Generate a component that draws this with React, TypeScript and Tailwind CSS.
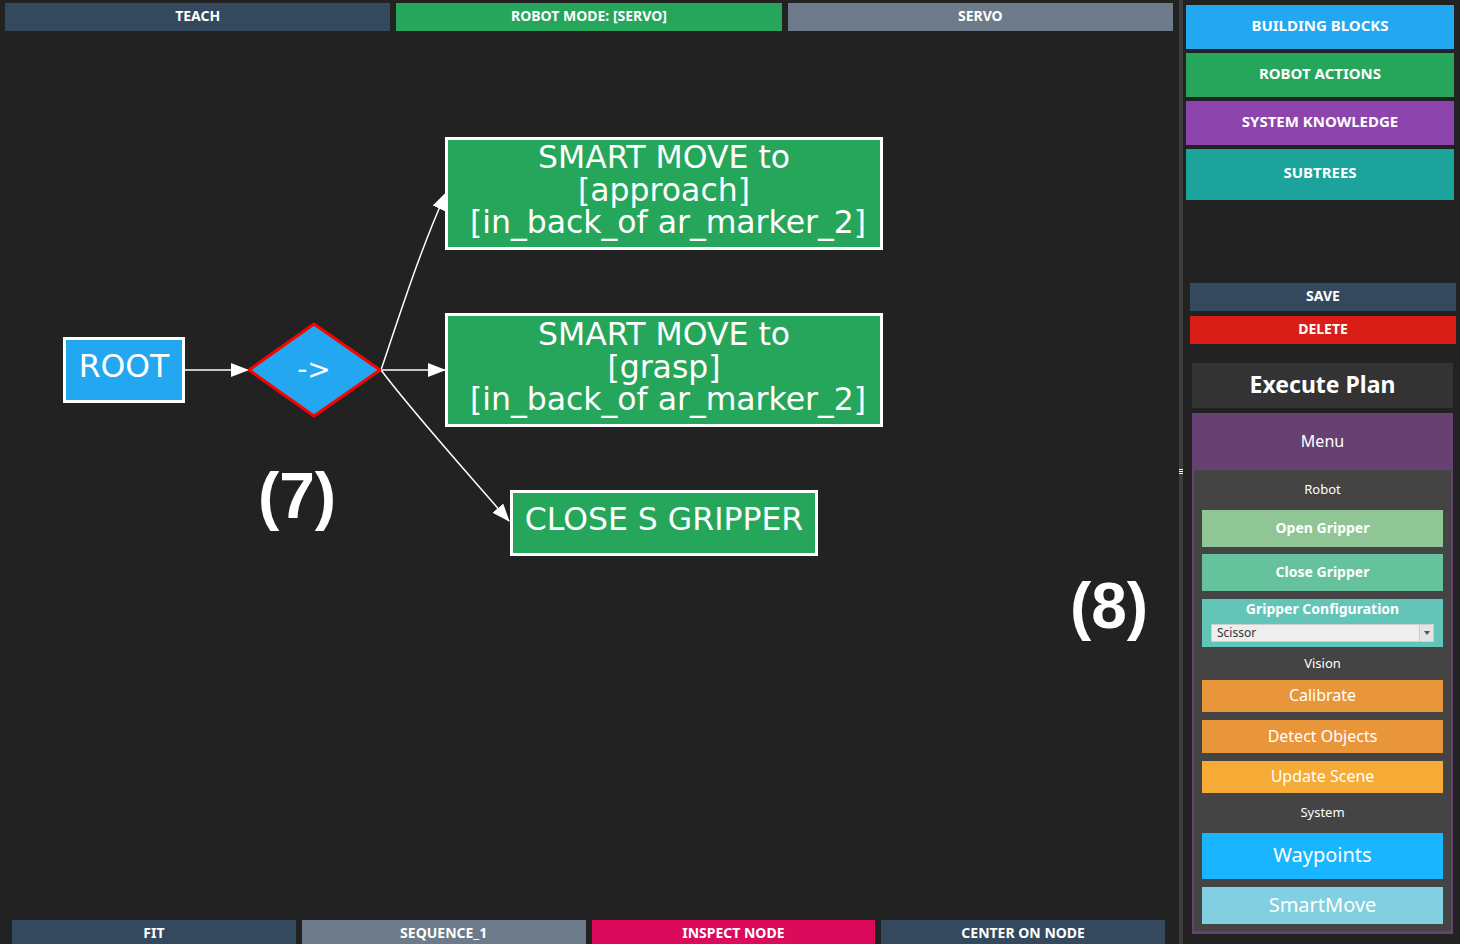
import React from "react";

const topTabs = [
  { label: "TEACH", cls: "bg-[#34495e]" },
  { label: "ROBOT MODE: [SERVO]", cls: "bg-[#26a65b]" },
  { label: "SERVO", cls: "bg-[#6c7a89]" },
];

const bottomTabs = [
  { label: "FIT", cls: "bg-[#34495e]" },
  { label: "SEQUENCE_1", cls: "bg-[#6c7a89]" },
  { label: "INSPECT NODE", cls: "bg-[#db0a5b]" },
  { label: "CENTER ON NODE", cls: "bg-[#34495e]" },
];

const paletteTabs = [
  { label: "BUILDING BLOCKS", cls: "bg-[#22a7f0] h-[44px]" },
  { label: "ROBOT ACTIONS", cls: "bg-[#26a65b] h-[44px]" },
  { label: "SYSTEM KNOWLEDGE", cls: "bg-[#8e44ad] h-[44px]" },
  { label: "SUBTREES", cls: "bg-[#1ba39c] h-[51px]" },
];

const graphFont = "'DejaVu Sans', sans-serif";

function Graph() {
  return (
    <svg className="absolute inset-0" width="1179" height="889" viewBox="0 0 1179 889">
      <defs>
        <marker id="arr" markerWidth="18" markerHeight="14" refX="17" refY="7" orient="auto" markerUnits="userSpaceOnUse">
          <path d="M0,0 L18,7 L0,14 Z" fill="#fff" />
        </marker>
      </defs>
      <g transform="translate(0,-31)">
        {/* edges */}
        <line x1="185" y1="370" x2="248" y2="370" stroke="#fff" strokeWidth="1.5" markerEnd="url(#arr)" />
        <path d="M381,370 C398,320 420,250 446,193" stroke="#fff" strokeWidth="1.5" fill="none" markerEnd="url(#arr)" />
        <line x1="381" y1="370" x2="445" y2="370" stroke="#fff" strokeWidth="1.5" markerEnd="url(#arr)" />
        <path d="M381,370 C415,415 465,470 509,521" stroke="#fff" strokeWidth="1.5" fill="none" markerEnd="url(#arr)" />

        {/* root */}
        <rect x="64.5" y="338.5" width="119" height="63" fill="#22a7f0" stroke="#fff" strokeWidth="3" />
        <text x="124" y="377" fill="#fff" fontSize="31.5" textAnchor="middle" fontFamily={graphFont}>ROOT</text>

        {/* sequence */}
        <polygon points="249,370 314,324 380,370 314,416" fill="#22a7f0" stroke="#ff0000" strokeWidth="3" strokeLinejoin="round" />
        <text x="314" y="379" fill="#fff" fontSize="28" textAnchor="middle" fontFamily={graphFont}>-&gt;</text>

        {/* smart move approach */}
        <rect x="446.5" y="138.5" width="435" height="110" fill="#26a65b" stroke="#fff" strokeWidth="3" />
        <text fill="#fff" fontSize="31.5" textAnchor="middle" fontFamily={graphFont}>
          <tspan x="664" y="168">SMART MOVE to</tspan>
          <tspan x="664" y="201">[approach]</tspan>
          <tspan x="668" y="233">[in_back_of ar_marker_2]</tspan>
        </text>

        {/* smart move grasp */}
        <rect x="446.5" y="314.5" width="435" height="111" fill="#26a65b" stroke="#fff" strokeWidth="3" />
        <text fill="#fff" fontSize="31.5" textAnchor="middle" fontFamily={graphFont}>
          <tspan x="664" y="345">SMART MOVE to</tspan>
          <tspan x="664" y="378">[grasp]</tspan>
          <tspan x="668" y="410">[in_back_of ar_marker_2]</tspan>
        </text>

        {/* close gripper */}
        <rect x="511.5" y="491.5" width="305" height="63" fill="#26a65b" stroke="#fff" strokeWidth="3" />
        <text x="664" y="530" fill="#fff" fontSize="31.5" textAnchor="middle" fontFamily={graphFont}>CLOSE S GRIPPER</text>

        {/* annotations */}
        <text x="297" y="518" fill="#fff" fontSize="64" fontWeight="bold" textAnchor="middle" fontFamily="'Liberation Sans', sans-serif">(7)</text>
        <text x="1109" y="628" fill="#fff" fontSize="64" fontWeight="bold" textAnchor="middle" fontFamily="'Liberation Sans', sans-serif">(8)</text>
      </g>
    </svg>
  );
}

function MenuButton({ label, cls }: { label: string; cls: string }) {
  return (
    <div className={`flex items-center justify-center pb-[2px] text-white ${cls}`}>{label}</div>
  );
}

export default function App() {
  return (
    <div className="flex h-[944px] w-[1460px] overflow-hidden bg-[#222222] font-['Noto_Sans',sans-serif] text-white">
      {/* Left: editor */}
      <div className="flex w-[1179px] flex-col">
        <div className="flex gap-[6px] pl-[5px] pr-[6px] pt-[3px]">
          {topTabs.map(t => (
            <div key={t.label} className={`flex h-[28px] flex-1 items-center justify-center pb-[3px] text-[14px] font-bold ${t.cls}`}>
              {t.label}
            </div>
          ))}
        </div>

        <div className="relative flex-1">
          <Graph />
        </div>

        <div className="flex h-[24px] gap-[6px] pl-[12px] pr-[14px]">
          {bottomTabs.map(t => (
            <div key={t.label} className={`flex h-[28px] flex-1 items-start justify-center pt-[2px] text-[14px] font-bold ${t.cls}`}>
              {t.label}
            </div>
          ))}
        </div>
      </div>

      {/* Splitter */}
      <div className="relative w-[4px] bg-[#3c3c3c]">
        <div className="absolute left-[0px] top-[469px] flex w-[4px] flex-col gap-[1px]">
          <div className="h-[1px] bg-white" />
          <div className="h-[1px] bg-white" />
          <div className="h-[1px] bg-white" />
        </div>
      </div>

      {/* Right: palette */}
      <div className="flex w-[277px] flex-col pt-[5px]">
        <div className="flex flex-col gap-[4px] pl-[3px] pr-[6px]">
          {paletteTabs.map(t => (
            <div key={t.label} className={`flex items-center justify-center pb-[4px] text-[15px] font-bold ${t.cls}`}>
              {t.label}
            </div>
          ))}
        </div>

        <div className="mt-[83px] flex flex-col gap-[5px] pl-[7px] pr-[4px]">
          <div className="flex h-[28px] items-center justify-center pb-[3px] bg-[#34495e] text-[14px] font-bold">SAVE</div>
          <div className="flex h-[28px] items-center justify-center pb-[3px] bg-[#d91e18] text-[14px] font-bold">DELETE</div>
        </div>

        <div className="ml-[9px] mr-[7px] mt-[19px] flex h-[45px] items-center justify-center pb-[2px] bg-[#333333] text-[23px] font-bold">
          Execute Plan
        </div>

        <div className="ml-[9px] mr-[7px] mt-[5px] flex h-[521px] flex-col bg-[#674172] px-[2px] pb-[3px]">
          <div className="flex h-[57px] items-center justify-center pb-[2px] text-[16px]">Menu</div>
          <div className="flex flex-1 flex-col bg-[#444444] px-[8px]">
            <div className="flex h-[40px] items-center justify-center text-[13px]">Robot</div>
            <MenuButton label="Open Gripper" cls="h-[37px] bg-[#90c695] text-[14px] font-bold" />
            <MenuButton label="Close Gripper" cls="mt-[7px] h-[37px] bg-[#66c29c] text-[14px] font-bold" />
            <div className="mt-[8px] flex h-[48px] flex-col items-center bg-[#62c5b8] px-[9px]">
              <div className="text-[14px] font-bold leading-[20px]">Gripper Configuration</div>
              <div className="mt-[5px] flex h-[18px] w-full items-center border border-[#cfcfcf] bg-[#eeeeee] pl-[5px] text-[12px] leading-none text-[#333333]">
                <span className="flex-1">Scissor</span>
                <span className="flex h-full w-[14px] items-center justify-center border-l border-[#cfcfcf] bg-[#e4e4e4]">
                  <svg width="6" height="4" viewBox="0 0 6 4"><path d="M0,0 L6,0 L3,4 Z" fill="#555" /></svg>
                </span>
              </div>
            </div>
            <div className="flex h-[33px] items-center justify-center text-[13px]">Vision</div>
            <MenuButton label="Calibrate" cls="h-[32px] bg-[#e9953a] text-[16px]" />
            <MenuButton label="Detect Objects" cls="mt-[8px] h-[33px] bg-[#e9953a] text-[16px]" />
            <MenuButton label="Update Scene" cls="mt-[8px] h-[32px] bg-[#f5ab35] text-[16px]" />
            <div className="flex h-[40px] items-center justify-center text-[13px]">System</div>
            <MenuButton label="Waypoints" cls="h-[46px] bg-[#19b5fe] text-[20px]" />
            <MenuButton label="SmartMove" cls="mt-[8px] h-[37px] bg-[#81cfe0] text-[20px]" />
          </div>
        </div>
      </div>
    </div>
  );
}
